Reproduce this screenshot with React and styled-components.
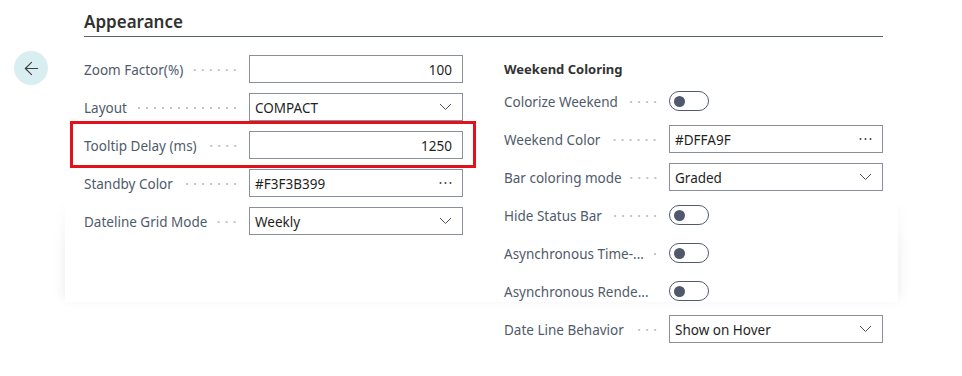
import React from 'react';
import styled, { createGlobalStyle } from 'styled-components';
import { ArrowLeft } from 'lucide-react';

const GlobalStyle = createGlobalStyle`
    html, body {
        margin: 0;
        padding: 0;
        background: #ffffff;
    }
    body {
        font-family: "Noto Sans", "Open Sans", sans-serif;
        -webkit-font-smoothing: antialiased;
    }
`;

const Page = styled.div`
    position: relative;
    width: 962px;
    height: 376px;
    display: flex;
    align-items: flex-start;
    padding-left: 14px;
    box-sizing: border-box;
    overflow: hidden;
`;

const ShadowFade = styled.div`
    position: absolute;
    left: 45px;
    right: 44px;
    top: 180px;
    height: 132px;
    z-index: 0;
    -webkit-mask-image: linear-gradient(to bottom, transparent 0%, transparent 15%, #000 55%, #000 85%, transparent 100%);
    mask-image: linear-gradient(to bottom, transparent 0%, transparent 15%, #000 55%, #000 85%, transparent 100%);
`;

const ShadowCard = styled.div`
    position: absolute;
    inset: 0 20px 10px 20px;
    background: #ffffff;
    box-shadow: 0 0 12px rgba(0, 0, 0, 0.09);
`;

const Nav = styled.div`
    padding-top: 51px;
    position: relative;
    z-index: 1;
`;

const BackButton = styled.button`
    width: 34px;
    height: 34px;
    border-radius: 50%;
    border: none;
    background: #d9eef1;
    color: #3f3f3f;
    display: flex;
    align-items: center;
    justify-content: center;
    padding: 0;
`;

const Main = styled.div`
    position: relative;
    z-index: 1;
    width: 799px;
    margin-left: 36px;
`;

const Header = styled.div`
    height: 37px;
    box-sizing: border-box;
    padding-top: 11px;
    border-bottom: 1px solid #5a626e;
    font-size: 17px;
    font-weight: 600;
    color: #323232;
    line-height: 22px;
`;

const Columns = styled.div`
    display: grid;
    grid-template-columns: 379px 379px;
    column-gap: 41px;
    padding-top: 13px;
`;

const Column = styled.div`
    display: flex;
    flex-direction: column;
`;

const GroupTitle = styled.div`
    height: 32px;
    display: flex;
    align-items: center;
    padding-top: 5px;
    box-sizing: border-box;
    font-size: 13px;
    font-weight: 700;
    color: #333333;
`;

const Row = styled.div`
    position: relative;
    height: 38px;
    display: grid;
    grid-template-columns: 165px 214px;
    align-items: center;
    &::after {
        content: '';
        display: ${({ highlighted }) => (highlighted ? 'block' : 'none')};
        position: absolute;
        left: -14px;
        right: -13px;
        top: -5px;
        bottom: -4px;
        border: 3px solid #e3111c;
        pointer-events: none;
    }
`;

const LabelCell = styled.div`
    display: flex;
    align-items: center;
    min-width: 0;
    padding-right: 10px;
    padding-top: 2px;
`;

const LabelText = styled.span`
    font-size: 13.5px;
    color: #505b6a;
    white-space: nowrap;
`;

const Leader = styled.span`
    flex: 1;
    height: 4px;
    margin-left: 8px;
    background-image: radial-gradient(circle, #c4c4c4 1px, transparent 1.3px);
    background-size: 8px 4px;
    background-repeat: repeat-x;
    background-position: right center;
`;

const Field = styled.div`
    height: 28px;
    box-sizing: border-box;
    border: 1px solid #8a9099;
    display: flex;
    align-items: center;
    justify-content: ${({ align }) => (align === 'right' ? 'flex-end' : 'space-between')};
    padding: 2px 10px 0 5px;
    font-size: 13.5px;
    color: #1f1f1f;
    background: #ffffff;
`;

const FieldIcon = styled.span`
    display: flex;
    align-items: center;
    margin-top: -2px;
    color: #505050;
`;

const Toggle = styled.div`
    width: 40px;
    height: 20px;
    box-sizing: border-box;
    border: 1px solid #525b6b;
    border-radius: 10px;
    display: flex;
    align-items: center;
    padding-left: 4px;
    &::before {
        content: '';
        width: 11px;
        height: 11px;
        border-radius: 50%;
        background: #4f596b;
    }
`;

const Chevron = () => (
    <FieldIcon>
        <svg width="13" height="8" viewBox="0 0 13 8">
            <polyline points="1,1 6.5,6.5 12,1" fill="none" stroke="#555" strokeWidth="1" />
        </svg>
    </FieldIcon>
);

const Dots = () => (
    <FieldIcon>
        <svg width="13" height="4" viewBox="0 0 13 4">
            <circle cx="1.5" cy="2" r="1" fill="#444" />
            <circle cx="6.5" cy="2" r="1" fill="#444" />
            <circle cx="11.5" cy="2" r="1" fill="#444" />
        </svg>
    </FieldIcon>
);

function Setting({ label, title, highlighted, children }) {
    return (
        <Row highlighted={highlighted}>
            <LabelCell title={title || label}>
                <LabelText>{label}</LabelText>
                <Leader />
            </LabelCell>
            {children}
        </Row>
    );
}

function App() {
    return (
        <>
            <GlobalStyle />
            <Page>
                <ShadowFade>
                    <ShadowCard />
                </ShadowFade>
                <Nav>
                    <BackButton aria-label="Back">
                        <ArrowLeft size={21} strokeWidth={1.3} />
                    </BackButton>
                </Nav>
                <Main>
                    <Header>Appearance</Header>
                    <Columns>
                        <Column>
                            <Setting label="Zoom Factor(%)">
                                <Field align="right">100</Field>
                            </Setting>
                            <Setting label="Layout">
                                <Field>COMPACT<Chevron /></Field>
                            </Setting>
                            <Setting label="Tooltip Delay (ms)" highlighted>
                                <Field align="right">1250</Field>
                            </Setting>
                            <Setting label="Standby Color">
                                <Field>#F3F3B399<Dots /></Field>
                            </Setting>
                            <Setting label="Dateline Grid Mode">
                                <Field>Weekly<Chevron /></Field>
                            </Setting>
                        </Column>
                        <Column>
                            <GroupTitle>Weekend Coloring</GroupTitle>
                            <Setting label="Colorize Weekend">
                                <Toggle />
                            </Setting>
                            <Setting label="Weekend Color">
                                <Field>#DFFA9F<Dots /></Field>
                            </Setting>
                            <Setting label="Bar coloring mode">
                                <Field>Graded<Chevron /></Field>
                            </Setting>
                            <Setting label="Hide Status Bar">
                                <Toggle />
                            </Setting>
                            <Setting label="Asynchronous Time-..." title="Asynchronous Time-Axis Rendering">
                                <Toggle />
                            </Setting>
                            <Setting label="Asynchronous Rende..." title="Asynchronous Rendering">
                                <Toggle />
                            </Setting>
                            <Setting label="Date Line Behavior">
                                <Field>Show on Hover<Chevron /></Field>
                            </Setting>
                        </Column>
                    </Columns>
                </Main>
            </Page>
        </>
    );
}

export default App;
